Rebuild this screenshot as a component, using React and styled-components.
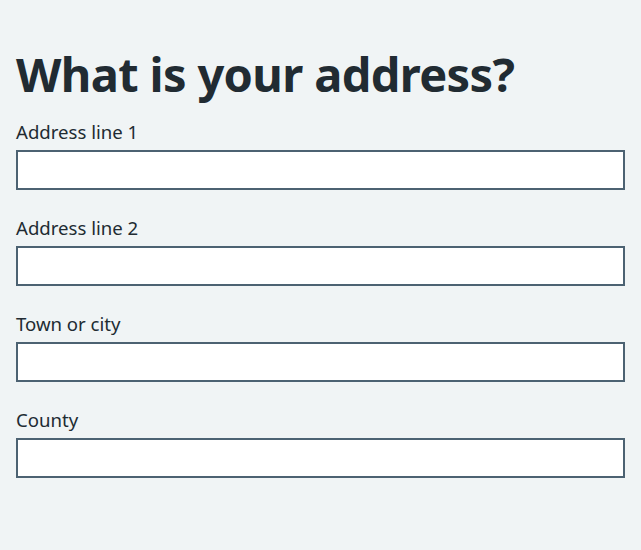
import React from "react";
import styled, { createGlobalStyle } from "styled-components";

const GlobalStyle = createGlobalStyle`
  html, body {
    margin: 0;
    padding: 0;
    background: #f0f4f5;
  }
  body {
    font-family: "Noto Sans", "Open Sans", Arial, sans-serif;
    color: #212b32;
  }
`;

const Main = styled.main`
  padding: 46px 16px 72px;
  box-sizing: border-box;
  min-height: 550px;
`;

const Fieldset = styled.fieldset`
  border: 0;
  margin: 0;
  padding: 0;
`;

const Legend = styled.legend`
  padding: 0;
  margin: 0 0 16px;
`;

const Heading = styled.h1`
  margin: 0;
  font-size: 47px;
  line-height: 56px;
  font-weight: 700;
  letter-spacing: -0.65px;
  color: #212b32;
`;

const FormGroup = styled.div`
  margin-bottom: 24px;
  &:last-child {
    margin-bottom: 0;
  }
`;

const Label = styled.label`
  display: block;
  font-size: 18.6px;
  line-height: 28px;
  margin-bottom: 4px;
  color: #212b32;
`;

const Input = styled.input`
  display: block;
  width: 100%;
  height: 40px;
  box-sizing: border-box;
  border: 2px solid #4c6272;
  border-radius: 0;
  background: #ffffff;
  padding: 4px 8px;
  font-size: 19px;
  font-family: inherit;
  outline: none;
  margin: 0;
`;

const fields = [
  { id: "address-line-1", label: "Address line 1" },
  { id: "address-line-2", label: "Address line 2" },
  { id: "town", label: "Town or city" },
  { id: "county", label: "County" },
];

export default function App() {
  return (
    <>
      <GlobalStyle />
      <Main>
        <Fieldset>
          <Legend>
            <Heading>What is your address?</Heading>
          </Legend>
          {fields.map((f) => (
            <FormGroup key={f.id}>
              <Label htmlFor={f.id}>{f.label}</Label>
              <Input id={f.id} type="text" />
            </FormGroup>
          ))}
        </Fieldset>
      </Main>
    </>
  );
}
